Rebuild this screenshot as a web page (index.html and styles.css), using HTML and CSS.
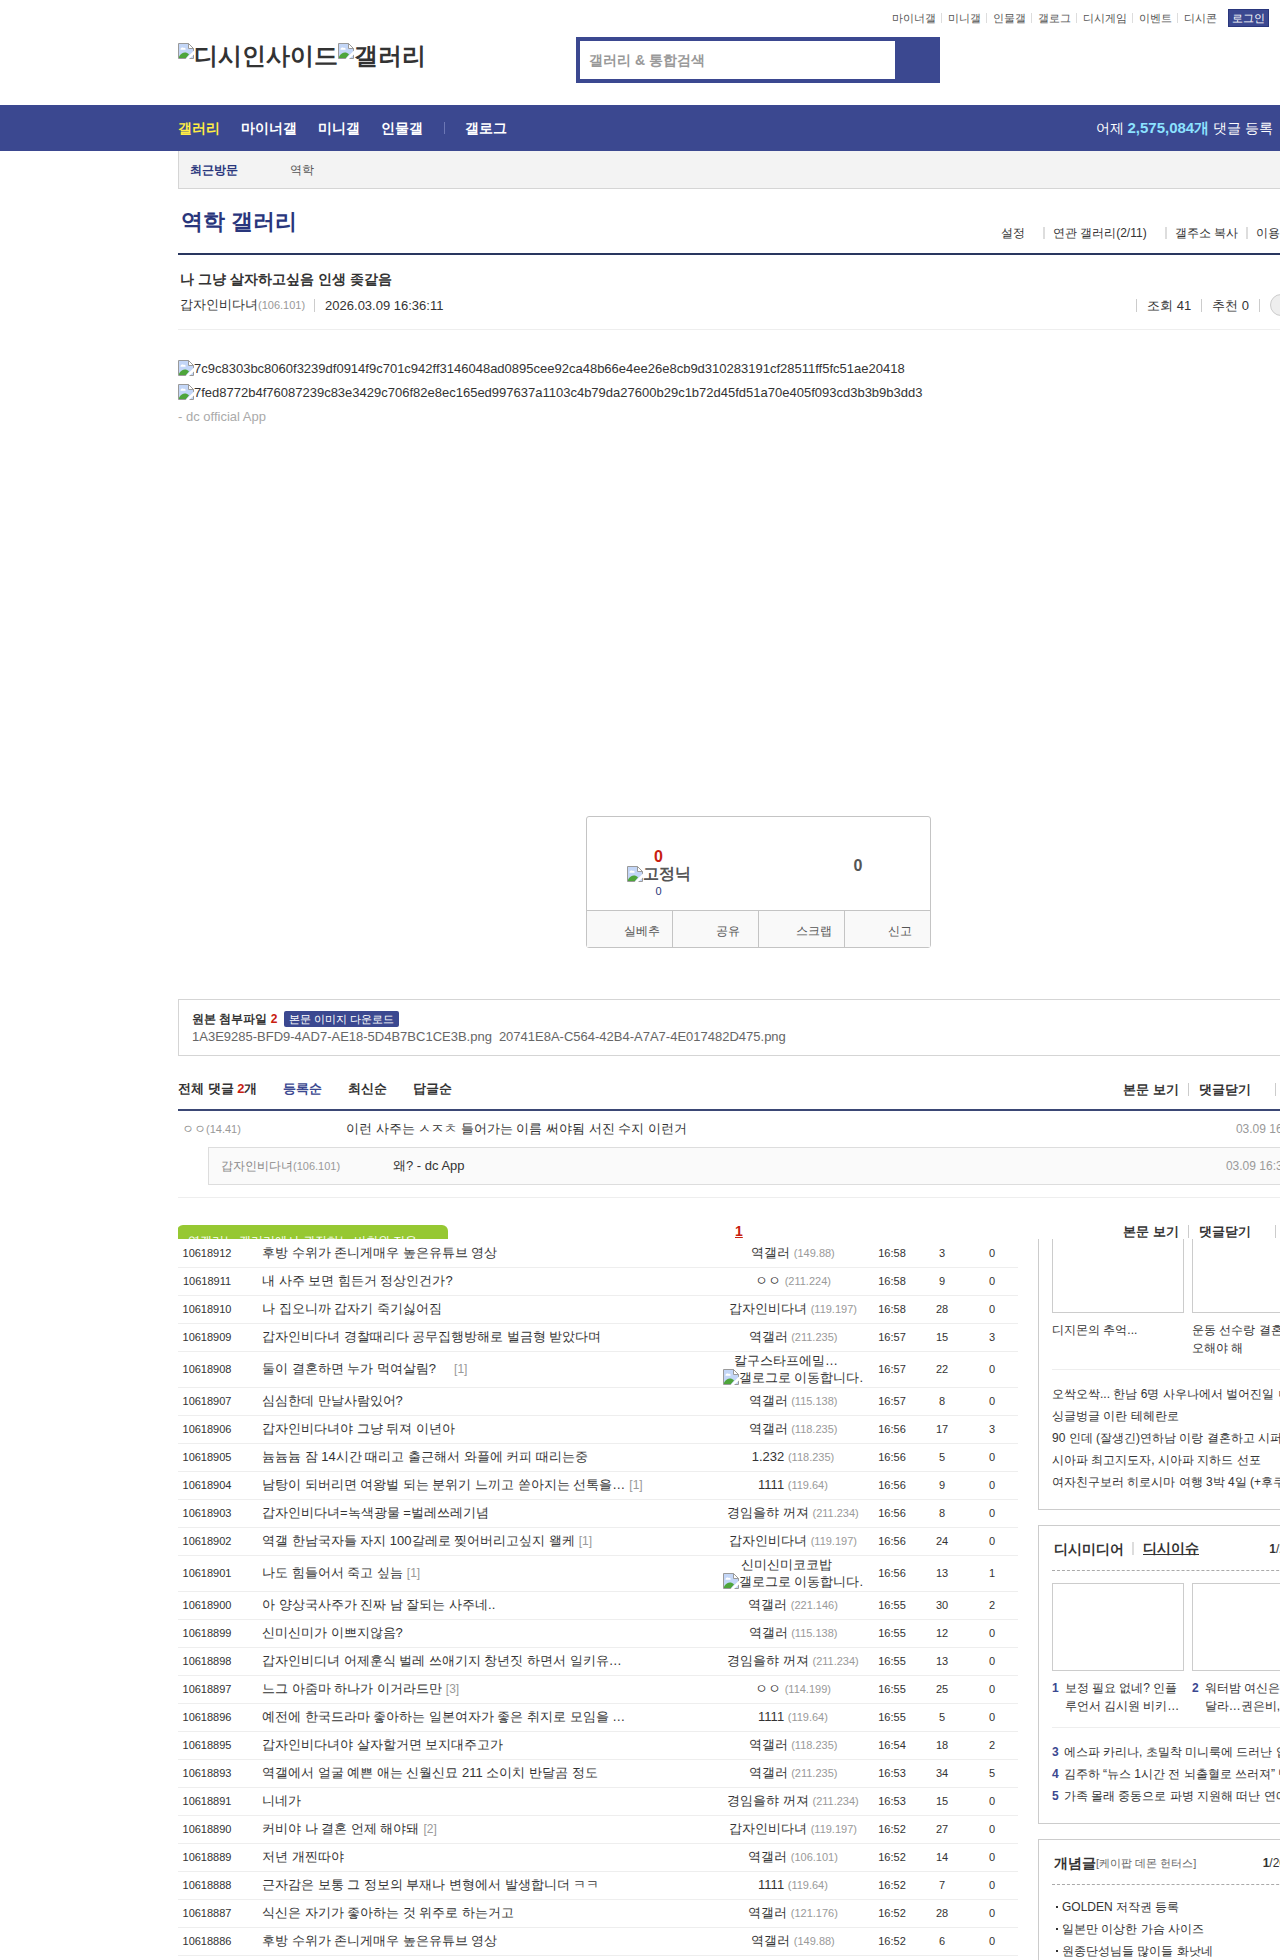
FILE: index.html
```html
<!DOCTYPE html>
<html lang="ko">
<head>
<meta charset="utf-8">
<title>역학 갤러리</title>
<link rel="stylesheet" href="styles.css">
</head>
<body>
<svg class="defs" aria-hidden="true">
  <symbol id="pic" viewBox="0 0 16 16">
    <path d="M.5 .5H10.5L15.5 5.5V15.5H.5Z" fill="#c3d6f7" stroke="#9a9a9a"/>
    <path d="M2.5 6.5C2.5 4.5 5 4 5.5 5C7 4.5 8 5.5 7.5 6.8H2.5Z" fill="#fff"/>
    <path d="M1 15V13.5C4 9 8 8.500 11 11.500L8 15Z" fill="#4ea53b"/>
    <path d="M10.5 .5V5.5H15.5Z" fill="#fff" stroke="#9a9a9a"/>
    <path d="M16 7.500L7.500 16H11L16 11.500Z" fill="#fff"/>
  </symbol>
</svg>
<div class="page">
  <header class="wrap">
    <div class="util">
      <ul class="bars">
        <li><a href="#">마이너갤</a></li><li><a href="#">미니갤</a></li><li><a href="#">인물갤</a></li><li><a href="#">갤로그</a></li><li><a href="#">디시게임</a></li><li><a href="#">이벤트</a></li><li><a href="#">디시콘</a></li>
      </ul>
      <a class="login" href="#">로그인</a>
    </div>
    <div class="brand">
      <h1><a href="#"><svg class="pic"><use href="#pic"/></svg>디시인사이드</a><a href="#"><svg class="pic"><use href="#pic"/></svg>갤러리</a></h1>
      <form class="search">
        <input type="text" placeholder="갤러리 &amp; 통합검색" aria-label="갤러리 &amp; 통합검색">
        <button type="button" aria-label="검색"></button>
      </form>
    </div>
  </header>

  <nav class="gnb">
    <div class="wrap">
      <ul>
        <li><a class="on" href="#">갤러리</a></li><li><a href="#">마이너갤</a></li><li><a href="#">미니갤</a></li><li><a href="#">인물갤</a></li><li class="cut"><a href="#">갤로그</a></li>
      </ul>
      <p>어제 <strong>2,575,084개</strong> 댓글 등록</p>
    </div>
  </nav>

  <div class="wrap">
    <div class="visit"><strong>최근방문</strong><a href="#">역학</a></div>

    <div class="gall">
      <h2>역학 갤러리</h2>
      <ul>
        <li class="wide"><button type="button">설정</button></li><li class="wide"><button type="button">연관 갤러리(2/11)</button></li><li><button type="button">갤주소 복사</button></li><li><a href="#">이용안내</a></li>
      </ul>
    </div>

    <article>
      <div class="post-head">
        <h3>나 그냥 살자하고싶음 인생 좆같음</h3>
        <div class="meta">
          <span>갑자인비다녀<small>(106.101)</small></span>
          <time>2026.03.09 16:36:11</time>
          <ul><li>조회 41</li><li>추천 0</li><li><a class="pill" href="#">댓글 2</a></li></ul>
        </div>
      </div>
      <div class="body">
        <p><svg class="pic"><use href="#pic"/></svg>7c9c8303bc8060f3239df0914f9c701c942ff3146048ad0895cee92ca48b66e4ee26e8cb9d310283191cf28511ff5fc51ae20418</p>
        <p><svg class="pic"><use href="#pic"/></svg>7fed8772b4f76087239c83e3429c706f82e8ec165ed997637a1103c4b79da27600b29c1b72d45fd51a70e405f093cd3b3b9b3dd3</p>
        <p class="app">- dc official App</p>
      </div>
      <div class="vote">
        <div class="counts">
          <div class="up"><b>0</b><span class="fix"><svg class="pic"><use href="#pic"/></svg>고정닉</span><small>0</small></div>
          <div class="down">0</div>
        </div>
        <div class="acts">
          <button type="button">실베추</button><button type="button">공유</button><button type="button">스크랩</button><button type="button">신고</button>
        </div>
      </div>
      <div class="files">
        <div><strong>원본 첨부파일 <em>2</em></strong><button type="button">본문 이미지 다운로드</button></div>
        <a href="#">1A3E9285-BFD9-4AD7-AE18-5D4B7BC1CE3B.png</a><a href="#">20741E8A-C564-42B4-A7A7-4E017482D475.png</a>
      </div>
    </article>

    <section>
      <div class="cmt-head">
        <h4>전체 댓글 <em>2</em>개</h4>
        <button class="on" type="button">등록순</button><button type="button">최신순</button><button type="button">답글순</button>
        <div class="ctl"><a href="#">본문 보기</a><button class="fold" type="button">댓글닫기</button><button type="button">새로고침</button></div>
      </div>
      <div class="cmt"><span class="who">ㅇㅇ<small>(14.41)</small></span><p>이런 사주는 ㅅㅈㅊ 들어가는 이름 써야됨 서진 수지 이런거</p><time>03.09 16:41:05</time></div>
      <div class="cmt reply"><span class="who">갑자인비다녀<small>(106.101)</small></span><p>왜? - dc App</p><time>03.09 16:39:27</time></div>
      <div class="cmt-foot">
        <p class="tip">역갤러는 갤러리에서 권장하는 비회원 전용</p>
        <a class="pg" href="#">1</a>
        <div class="ctl"><a href="#">본문 보기</a><button class="fold" type="button">댓글닫기</button><button type="button">새로고침</button></div>
      </div>
    </section>

    <div class="cols">
      <table>
        <colgroup><col class="c1"><col><col class="c3"><col class="c4"><col class="c4"><col class="c4"></colgroup>
        <tbody>
        <tr><td>10618912</td><td><a href="#">후방 수위가 존니게매우 높은유튜브 영상</a></td><td>역갤러 <small>(149.88)</small></td><td>16:58</td><td>3</td><td>0</td></tr>
        <tr><td>10618911</td><td><a href="#">내 사주 보면 힘든거 정상인건가?</a></td><td>ㅇㅇ <small>(211.224)</small></td><td>16:58</td><td>9</td><td>0</td></tr>
        <tr><td>10618910</td><td><a href="#">나 집오니까 갑자기 죽기싫어짐</a></td><td>갑자인비다녀 <small>(119.197)</small></td><td>16:58</td><td>28</td><td>0</td></tr>
        <tr><td>10618909</td><td><a href="#">갑자인비다녀 경찰때리다 공무집행방해로 벌금형 받았다며</a></td><td>역갤러 <small>(211.235)</small></td><td>16:57</td><td>15</td><td>3</td></tr>
        <tr class="tall"><td>10618908</td><td><a href="#">둘이 결혼하면 누가 먹여살림?</a><a class="n far" href="#">[1]</a></td><td><span class="nick">칼구스타프에밀…</span><svg class="pic"><use href="#pic"/></svg>갤로그로 이동합니다.</td><td>16:57</td><td>22</td><td>0</td></tr>
        <tr><td>10618907</td><td><a href="#">심심한데 만날사람있어?</a></td><td>역갤러 <small>(115.138)</small></td><td>16:57</td><td>8</td><td>0</td></tr>
        <tr><td>10618906</td><td><a href="#">갑자인비다녀야 그냥 뒤져 이년아</a></td><td>역갤러 <small>(118.235)</small></td><td>16:56</td><td>17</td><td>3</td></tr>
        <tr><td>10618905</td><td><a href="#">늄늄늄 잠 14시간 때리고 출근해서 와플에 커피 때리는중</a></td><td>1.232 <small>(118.235)</small></td><td>16:56</td><td>5</td><td>0</td></tr>
        <tr><td>10618904</td><td><a href="#">남탕이 되버리면 여왕벌 되는 분위기 느끼고 쏟아지는 선톡을…</a><a class="n" href="#">[1]</a></td><td>1111 <small>(119.64)</small></td><td>16:56</td><td>9</td><td>0</td></tr>
        <tr><td>10618903</td><td><a href="#">갑자인비다녀=녹색광물 =벌레쓰레기념</a></td><td>경임을햐 꺼져 <small>(211.234)</small></td><td>16:56</td><td>8</td><td>0</td></tr>
        <tr><td>10618902</td><td><a href="#">역갤 한남국자들 자지 100갈레로 찢어버리고싶지 왤케</a><a class="n" href="#">[1]</a></td><td>갑자인비다녀 <small>(119.197)</small></td><td>16:56</td><td>24</td><td>0</td></tr>
        <tr class="tall"><td>10618901</td><td><a href="#">나도 힘들어서 죽고 싶늠</a><a class="n" href="#">[1]</a></td><td><span class="nick">신미신미코코밥</span><svg class="pic"><use href="#pic"/></svg>갤로그로 이동합니다.</td><td>16:56</td><td>13</td><td>1</td></tr>
        <tr><td>10618900</td><td><a href="#">아 양상국사주가 진짜 남 잘되는 사주네..</a></td><td>역갤러 <small>(221.146)</small></td><td>16:55</td><td>30</td><td>2</td></tr>
        <tr><td>10618899</td><td><a href="#">신미신미가 이쁘지않음?</a></td><td>역갤러 <small>(115.138)</small></td><td>16:55</td><td>12</td><td>0</td></tr>
        <tr><td>10618898</td><td><a href="#">갑자인비디녀 어제훈식 벌레 쓰애기지 창년짓 하면서 일키유…</a></td><td>경임을햐 꺼져 <small>(211.234)</small></td><td>16:55</td><td>13</td><td>0</td></tr>
        <tr><td>10618897</td><td><a href="#">느그 아줌마 하나가 이거라드만</a><a class="n" href="#">[3]</a></td><td>ㅇㅇ <small>(114.199)</small></td><td>16:55</td><td>25</td><td>0</td></tr>
        <tr><td>10618896</td><td><a href="#">예전에 한국드라마 좋아하는 일본여자가 좋은 취지로 모임을 …</a></td><td>1111 <small>(119.64)</small></td><td>16:55</td><td>5</td><td>0</td></tr>
        <tr><td>10618895</td><td><a href="#">갑자인비다녀야 살자할거면 보지대주고가</a></td><td>역갤러 <small>(118.235)</small></td><td>16:54</td><td>18</td><td>2</td></tr>
        <tr><td>10618893</td><td><a href="#">역갤에서 얼굴 예쁜 애는 신월신묘 211 소이치 반달곰 정도</a></td><td>역갤러 <small>(211.235)</small></td><td>16:53</td><td>34</td><td>5</td></tr>
        <tr><td>10618891</td><td><a href="#">니네가</a></td><td>경임을햐 꺼져 <small>(211.234)</small></td><td>16:53</td><td>15</td><td>0</td></tr>
        <tr><td>10618890</td><td><a href="#">커비야 나 결혼 언제 해야돼</a><a class="n" href="#">[2]</a></td><td>갑자인비다녀 <small>(119.197)</small></td><td>16:52</td><td>27</td><td>0</td></tr>
        <tr><td>10618889</td><td><a href="#">저년 개찐따야</a></td><td>역갤러 <small>(106.101)</small></td><td>16:52</td><td>14</td><td>0</td></tr>
        <tr><td>10618888</td><td><a href="#">근자감은 보통 그 정보의 부재나 변형에서 발생합니더 ㅋㅋ</a></td><td>1111 <small>(119.64)</small></td><td>16:52</td><td>7</td><td>0</td></tr>
        <tr><td>10618887</td><td><a href="#">식신은 자기가 좋아하는 것 위주로 하는거고</a></td><td>역갤러 <small>(121.176)</small></td><td>16:52</td><td>28</td><td>0</td></tr>
        <tr><td>10618886</td><td><a href="#">후방 수위가 존니게매우 높은유튜브 영상</a></td><td>역갤러 <small>(149.88)</small></td><td>16:52</td><td>6</td><td>0</td></tr>
        </tbody>
      </table>

      <aside>
        <section class="box first">
          <div class="thumbs">
            <a href="#"><i></i><span>디지몬의 추억...</span></a>
            <a href="#"><i></i><span>운동 선수랑 결혼<br>오해야 해</span></a>
          </div>
          <ul class="list">
            <li><a href="#">오싹오싹... 한남 6명 사우나에서 벌어진일 ㅁ</a></li>
            <li><a href="#">싱글벙글 이란 테헤란로</a></li>
            <li><a href="#">90 인데 (잘생긴)연하남 이랑 결혼하고 시퍼</a></li>
            <li><a href="#">시아파 최고지도자, 시아파 지하드 선포</a></li>
            <li><a href="#">여자친구보러 히로시마 여행 3박 4일 (+후쿠</a></li>
          </ul>
        </section>
        <section class="box">
          <div class="box-head"><h4>디시미디어</h4><h4 class="tab"><a href="#">디시이슈</a></h4><span class="pager"><b>1</b>/2</span></div>
          <div class="thumbs">
            <a href="#"><i></i><span class="rank"><b>1</b><span>보정 필요 없네? 인플<br>루언서 김시원 비키…</span></span></a>
            <a href="#"><i></i><span class="rank"><b>2</b><span>워터밤 여신은<br>달라…권은비, </span></span></a>
          </div>
          <ul class="list">
            <li><b>3</b><a href="#">에스파 카리나, 초밀착 미니룩에 드러난 압</a></li>
            <li><b>4</b><a href="#">김주하 “뉴스 1시간 전 뇌출혈로 쓰러져” 방</a></li>
            <li><b>5</b><a href="#">가족 몰래 중동으로 파병 지원해 떠난 연예</a></li>
          </ul>
        </section>
        <section class="box last">
          <div class="box-head"><h4>개념글</h4><small>[케이팝 데몬 헌터스]</small><span class="pager"><b>1</b>/20</span></div>
          <ul class="dots">
            <li><a href="#">GOLDEN 저작권 등록</a></li>
            <li><a href="#">일본만 이상한 가슴 사이즈</a></li>
            <li><a href="#">원종단성님들 많이들 화낫네</a></li>
          </ul>
        </section>
      </aside>
    </div>
  </div>
</div>
</body>
</html>
```
FILE: styles.css
```css
* { box-sizing: border-box; }
body {
  margin: 0;
  overflow-x: hidden;
  background: #fff;
  color: #333;
  font: 13px/16px "Liberation Sans", sans-serif;
}
h1, h2, h3, h4, p, ul { margin: 0; padding: 0; }
ul { list-style: none; }
a { color: inherit; text-decoration: none; }
em { font-style: normal; color: #c82010; }
button {
  margin: 0;
  padding: 0;
  border: 0;
  background: none;
  color: inherit;
  font: inherit;
  cursor: pointer;
}
.defs { display: none; }
.pic { width: 16px; height: 16px; vertical-align: text-bottom; }
.page { min-width: 1516px; }
.wrap { width: 1160px; margin: 0 auto; }

/* top */
.util {
  display: flex;
  justify-content: flex-end;
  align-items: flex-start;
  height: 37px;
  padding: 9px 69px 0 0;
  font-size: 11px;
  line-height: 18px;
  color: #555;
}
.bars { display: flex; align-items: center; height: 18px; }
.bars li { padding: 0 5px 0 6px; line-height: 10px; }
.bars li + li { border-left: 1px solid #ddd; }
.login {
  margin-left: 6px;
  padding: 0 3px;
  border: 1px solid #29367c;
  background: #3b4890;
  color: #fff;
  line-height: 16px;
}
.brand { display: flex; height: 68px; }
.brand h1 { width: 398px; padding-top: 5px; font-size: 24px; line-height: 28px; }
.brand .pic { vertical-align: top; margin-top: 1px; }
.search { display: flex; width: 364px; height: 46px; padding: 4px; background: #3b4890; }
.search input {
  flex: 1;
  min-width: 0;
  padding: 0 9px;
  border: 0;
  font: bold 14px/20px "Liberation Sans", sans-serif;
}
.search input::placeholder { color: #999; opacity: 1; }
.search button { width: 41px; }

.gnb { background: #3b4890; color: #fff; font-size: 14px; }
.gnb .wrap { display: flex; justify-content: space-between; align-items: center; height: 46px; }
.gnb ul { display: flex; gap: 21px; font-weight: bold; }
.gnb .on { color: #ffed44; }
.gnb .cut { display: flex; align-items: center; gap: 20px; }
.gnb .cut::before { content: ""; width: 1px; height: 12px; background: #6c77b5; }
.gnb p { padding-right: 65px; }
.gnb strong { color: #8ce2ff; font-size: 15px; }

.visit {
  display: flex;
  gap: 52px;
  height: 38px;
  padding-left: 11px;
  border: 1px solid #d5d5d5;
  border-top: 0;
  background: #f3f3f3;
  font-size: 12px;
  line-height: 38px;
  color: #555;
}
.visit strong { color: #29367c; }

.gall { display: flex; justify-content: space-between; height: 66px; border-bottom: 2px solid #29365f; }
.gall h2 { padding: 19px 0 0 3px; font-size: 22px; line-height: 28px; color: #29367c; }
.gall ul { display: flex; padding: 38px 26px 0 0; font-size: 12px; line-height: 12px; }
.gall li { height: 12px; padding: 0 8px; }
.gall li.wide { padding-right: 18px; }
.gall li + li { border-left: 2px solid #ddd; }

/* post */
.post-head { height: 75px; padding: 15px 0 0 2px; border-bottom: 1px solid #eee; }
.post-head h3 { font-size: 14px; line-height: 18px; }
.meta { display: flex; align-items: center; height: 24px; margin-top: 5px; }
.meta small { font-size: 11px; color: #999; }
.meta time { margin-left: 9px; padding-left: 10px; border-left: 1px solid #ccc; line-height: 13px; }
.meta ul { display: flex; align-items: center; margin-left: auto; }
.meta li { padding: 0 10px; border-left: 1px solid #ccc; line-height: 13px; }
.meta li:last-child { display: flex; align-items: center; height: 13px; padding-right: 0; }
.pill {
  width: 68px;
  border: 1px solid #ccc;
  border-radius: 11px;
  background: #eee;
  line-height: 20px;
  text-align: center;
}
.body { min-height: 486px; padding-top: 27px; }
.body p { line-height: 24px; }
.body .app { color: #aaa; }
.vote { width: 345px; margin: 0 auto 51px; border: 1px solid #c4c4c4; border-radius: 3px; }
.counts { display: flex; height: 93px; font-size: 16px; font-weight: bold; color: #555; }
.up { display: flex; flex-direction: column; align-items: center; width: 144px; padding-top: 31px; }
.up b { color: #c82010; line-height: 18px; }
.fix { line-height: 16px; }
.up small { font-size: 11px; font-weight: normal; line-height: 18px; color: #29367c; }
.down { flex: 1; padding: 39px 0 0 56px; line-height: 20px; text-align: center; }
.acts { display: grid; grid-template-columns: repeat(4, 1fr); }
.acts button {
  height: 37px;
  padding: 3px 0 0 25px;
  border-top: 1px solid #c4c4c4;
  background: #f9f9f9;
  font-size: 12px;
  color: #555;
}
.acts button + button { border-left: 1px solid #c4c4c4; }
.files { padding: 10px 13px; border: 1px solid #d5d5d5; color: #666; }
.files div { display: flex; align-items: center; gap: 7px; height: 18px; margin-bottom: 1px; color: #333; font-size: 12px; }
.files button { height: 16px; padding: 0 5px; border-radius: 2px; background: #3b4890; color: #fff; font-size: 11px; line-height: 16px; }
.files a + a { margin-left: 7px; }

/* comments */
.cmt-head { display: flex; align-items: center; gap: 26px; height: 55px; padding-top: 13px; border-bottom: 2px solid #3b4875; font-weight: bold; }
.cmt-head h4 { font-size: 13px; }
.cmt-head .on { color: #3b4890; }
.ctl { display: flex; align-items: flex-start; margin-left: auto; font-weight: bold; line-height: 13px; }
.ctl > * { height: 13px; line-height: 13px; }
.ctl > * + * { padding-left: 10px; margin-left: 9px; border-left: 1px solid #ccc; }
.ctl .fold { margin-right: 15px; }
.cmt { display: flex; align-items: center; height: 36px; padding: 0 22px 0 4px; }
.cmt .who { width: 164px; font-size: 12px; color: #888; }
.cmt small { font-size: 11px; color: #999; }
.cmt time { margin-left: auto; font-size: 12px; color: #999; }
.reply { height: 38px; margin-left: 30px; padding: 0 31px 0 12px; border: 1px solid #ddd; background: #fafafa; }
.reply .who { width: 172px; }
.cmt-foot { display: flex; height: 42px; margin-top: 12px; padding-top: 27px; border-top: 1px solid #eee; overflow: hidden; }
.tip { width: 271px; height: 40px; margin-left: -1px; padding: 8px 11px; border-radius: 6px; background: #96c832; color: #fff; font-size: 12px; }
.pg { margin-left: 287px; font-size: 14px; font-weight: bold; line-height: 13px; color: #c82010; text-decoration: underline; }

/* list and side */
.cols { display: flex; justify-content: space-between; align-items: stretch; }
table { width: 840px; align-self: flex-start; margin-bottom: 6px; border-collapse: collapse; table-layout: fixed; }
.c1 { width: 58px; }
.c3 { width: 152px; }
.c4 { width: 50px; }
tr { height: 28px; border-bottom: 1px solid #eee; }
tr.tall { height: 36px; }
td { padding: 0; font-size: 11px; text-align: center; white-space: nowrap; }
td:nth-child(n+4) { padding-right: 2px; }
td:nth-child(2) { padding-left: 26px; font-size: 13px; text-align: left; }
td:nth-child(3) { padding-left: 2px; font-size: 13px; }
td small { font-size: 11px; color: #999; }
.n { margin-left: 4px; font-size: 12px; color: #999; }
.n.far { margin-left: 18px; }
.nick { display: block; padding-right: 14px; }
aside { display: flex; flex-direction: column; gap: 15px; width: 300px; font-size: 12px; }
.box { padding: 0 13px 16px; border: 1px solid #ccc; }
.box.first { border-top: 0; }
.box.last { flex: 1; padding-bottom: 0; border-bottom: 0; }
.box-head { display: flex; align-items: center; height: 45px; padding: 1px 38px 0 2px; border-bottom: 1px dashed #aaa; }
.box-head h4 { font-size: 14px; }
.box-head .tab { margin-left: 8px; padding-left: 9px; border-left: 2px solid #ddd; line-height: 13px; text-decoration: underline; }
.box-head small { font-size: 11px; color: #666; }
.pager { margin-left: auto; }
.thumbs { display: grid; grid-template-columns: 1fr 1fr; gap: 8px; padding: 12px 0; border-bottom: 1px solid #eee; line-height: 18px; }
.first .thumbs { padding-top: 0; }
.thumbs i { display: block; height: 88px; margin-bottom: 8px; border: 1px solid #ccc; }
.first i { height: 74px; border-top: 0; }
.thumbs span { white-space: nowrap; }
.rank { display: flex; gap: 6px; }
.box b { color: #3b4890; }
.box .pager b { color: #333; }
.list { padding-top: 13px; line-height: 22px; white-space: nowrap; }
.list b { margin-right: 5px; }
.dots { padding: 11px 0 0 10px; line-height: 22px; }
.dots a::before { content: ""; float: left; width: 2px; height: 2px; margin: 10px 0 0 -6px; background: #333; }
```
